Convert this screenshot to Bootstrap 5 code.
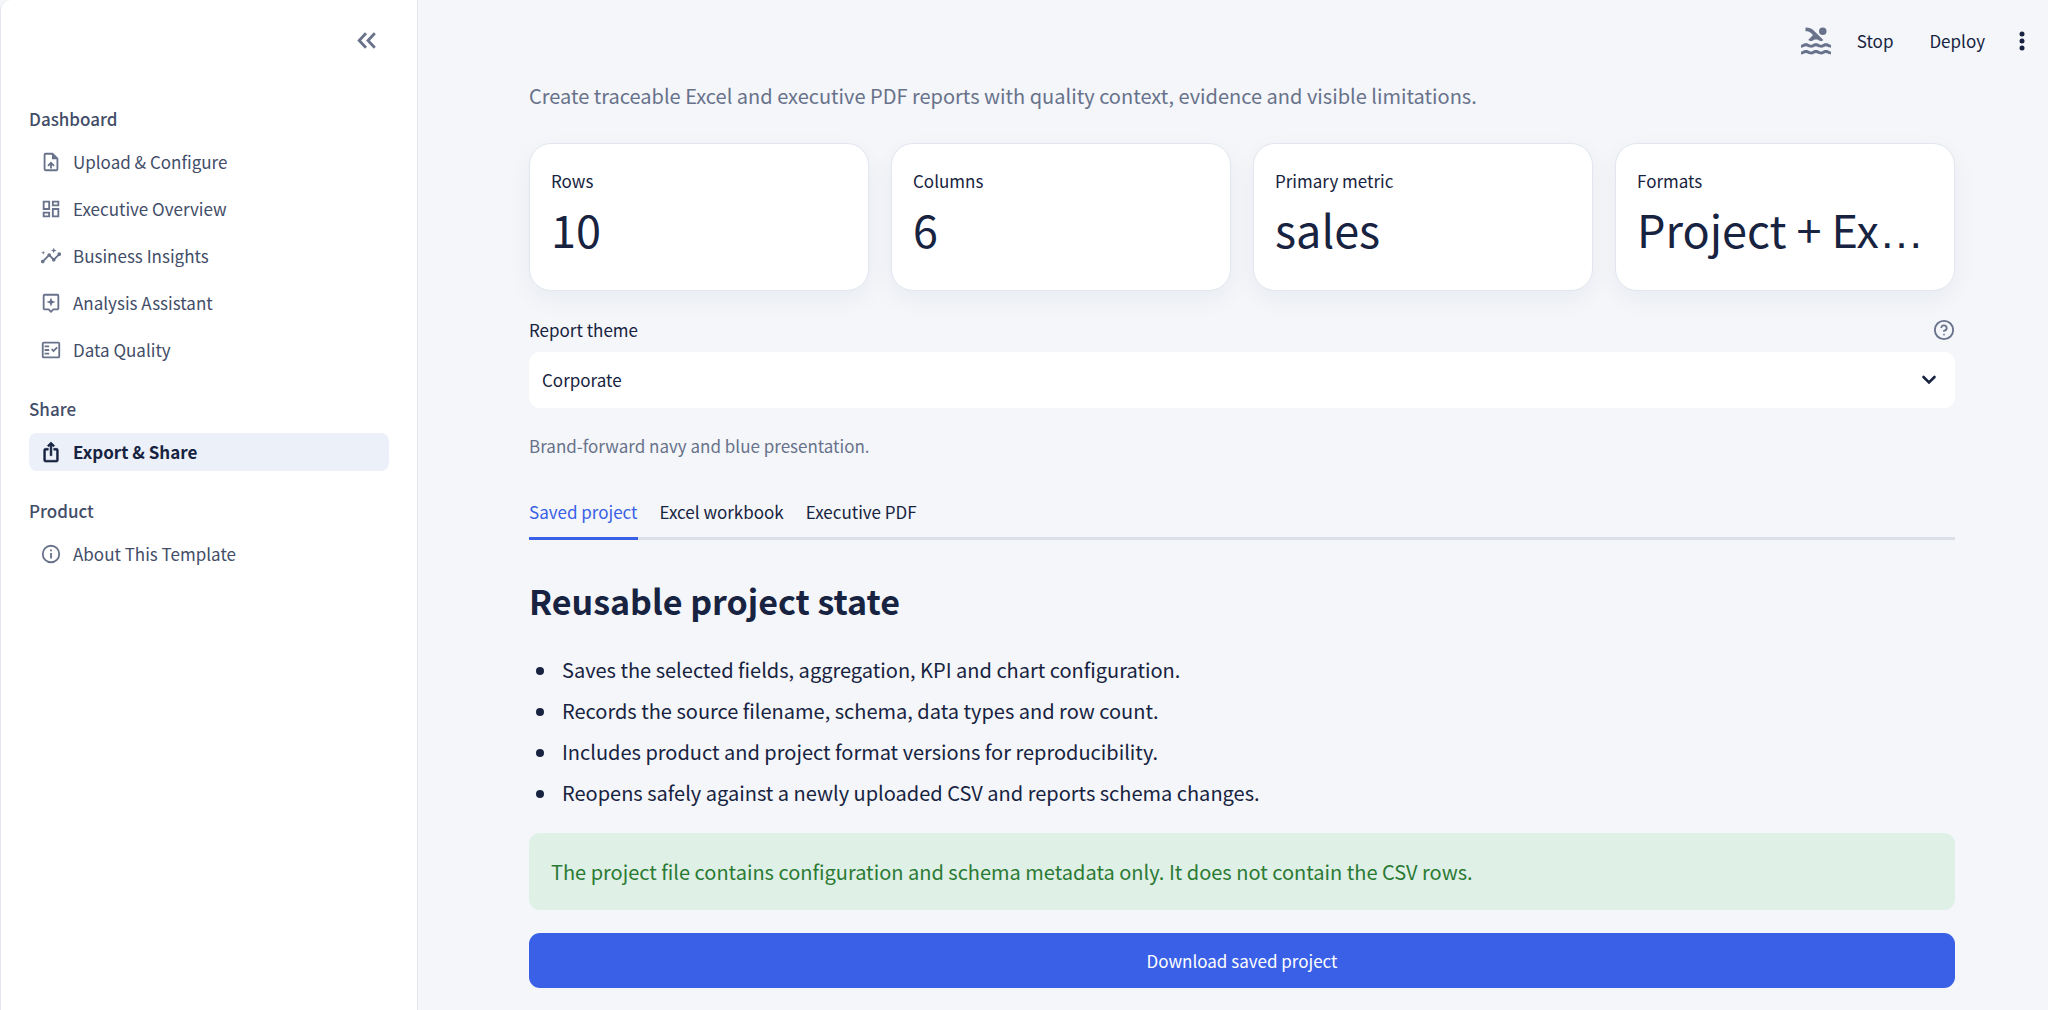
<!DOCTYPE html>
<html lang="en">
<head>
<meta charset="utf-8">
<meta name="viewport" content="width=device-width, initial-scale=1">
<title>Export &amp; Share</title>
<link href="https://cdn.jsdelivr.net/npm/bootstrap@5.3.0/dist/css/bootstrap.min.css" rel="stylesheet">
<style>
  :root { --ink: #172340; --soft: #424d68; --muted: #68728a; --brand: #3960e6; --page: #f4f6fa; }
  body { font-family: "Noto Sans CJK SC", "Open Sans", sans-serif; font-size: 20px; line-height: 32px; color: var(--ink); background: var(--page); }
  svg { display: block; flex: none; fill: currentColor; }
  .line-icon { fill: none; stroke: currentColor; }
  .text-small { font-size: 17px; line-height: 24px; }
  .side { width: 418px; background: #fff; border: 1px solid #e3e6ec; border-width: 0 1px; border-top-left-radius: 10px; padding: 0 28px; }
  .side-top { height: 81px; padding-right: 13px; margin-bottom: 24px; }
  .side-top .btn, .muted-icon { color: var(--muted); }
  .side-head { font-size: 17px; line-height: 28px; font-weight: 500; color: var(--soft); margin: 0 0 10px; }
  .side-group { margin-bottom: 26px; }
  .side-group .nav { gap: 9px; }
  .side-group .nav-link { height: 38px; padding: 0 11px; gap: 11px; border-radius: 8px; color: var(--soft); }
  .side-group .nav-link svg { color: var(--muted); }
  .side-group .nav-link.active, .side-group .nav-link.active svg { color: var(--ink); font-weight: 600; }
  .side-group .nav-link.active { background: #ecf0f9; }
  .bar-top { height: 81px; padding-right: 18px; gap: 29px; }
  .bar-top .btn { color: var(--ink); }
  .bar-actions { gap: 36px; }
  .bar-status { gap: 23px; }
  .page-body { padding: 0 93px 22px 111px; }
  .intro { color: var(--muted); line-height: 30px; margin-bottom: 32px; }
  .metrics { --bs-gutter-x: 22px; margin-bottom: 27px; }
  .metrics .card { border: 1px solid #e1e6ef; border-radius: 22px; padding: 25px 21px; box-shadow: 0 8px 24px rgba(23, 35, 64, .05); color: var(--ink); }
  .figure-value { font-size: 45px; line-height: 72px; }
  .figure-value .dots { font-family: "Liberation Sans", sans-serif; line-height: 1; }
  .label-row { margin-bottom: 10px; }
  .theme-select { height: 56px; border: 0; border-radius: 11px; padding: 0 48px 0 13px; color: var(--ink); font-size: 17px; background-image: none; appearance: none; }
  .select-arrow { position: absolute; right: 18px; top: 20px; pointer-events: none; }
  .caption-text { color: var(--muted); margin: 26px 0 34px; }
  .tab-row { gap: 22px; border-bottom: 3px solid #dcdfe7; }
  .tab-row .nav-link { border: 0; border-bottom: 3px solid transparent; border-radius: 0; padding: 8px 0 13px; margin-bottom: -3px; color: var(--ink); background: none; }
  .tab-row .nav-link.active { color: var(--brand); border-bottom-color: var(--brand); background: none; }
  .section-title { font-size: 34px; line-height: 48px; font-weight: 600; margin: 37px 0 24px; }
  .facts { padding-left: 29px; margin-bottom: 20px; }
  .facts li { line-height: 41px; padding-left: 4px; }
  .note { background: #dff0e7; color: #2b7a33; border: 0; border-radius: 11px; padding: 22px; line-height: 33px; margin-bottom: 23px; }
  .btn-save { height: 55px; border: 0; border-radius: 11px; background: var(--brand); color: #fff; }
</style>
</head>
<body>
<div class="d-flex min-vh-100">
  <aside class="side flex-shrink-0">
    <div class="side-top d-flex align-items-center justify-content-end">
      <button class="btn p-0 border-0" type="button" aria-label="Collapse sidebar">
        <svg class="line-icon" width="19" height="17" viewBox="0 0 19 17" stroke-width="2.8"><path d="M9 1.200 2.200 8.500 9 15.800M17.800 1.200 11 8.500 17.800 15.800"/></svg>
      </button>
    </div>
    <nav>
      <section class="side-group">
        <h2 class="side-head">Dashboard</h2>
        <div class="nav flex-column">
          <a class="nav-link d-flex align-items-center text-small" href="#"><svg width="22" height="22" viewBox="0 0 24 24"><path d="M14 2H6a2 2 0 0 0-2 2v16a2 2 0 0 0 2 2h12a2 2 0 0 0 2-2V8zM18 20H6V4h7v5h5zM8 15.500l1.400 1.400 1.600-1.600V19h2v-3.700l1.600 1.600L16 15.500l-4-4z"/></svg>Upload &amp; Configure</a>
          <a class="nav-link d-flex align-items-center text-small" href="#"><svg width="22" height="22" viewBox="0 0 24 24"><path d="M19 5v2h-4V5zM9 5v6H5V5zm10 8v6h-4v-6zM9 17v2H5v-2zM21 3h-8v6h8zM11 3H3v10h8zm10 8h-8v10h8zm-10 4H3v6h8z"/></svg>Executive Overview</a>
          <a class="nav-link d-flex align-items-center text-small" href="#"><svg width="22" height="22" viewBox="0 0 24 24"><path d="M21 8c-1.450 0-2.260 1.440-1.930 2.510l-3.550 3.560c-.3-.09-.74-.09-1.040 0l-2.550-2.550C12.270 10.450 11.460 9 10 9c-1.450 0-2.270 1.440-1.930 2.520l-4.560 4.550C2.440 15.740 1 16.550 1 18c0 1.100.9 2 2 2 1.450 0 2.260-1.440 1.930-2.510l4.550-4.560c.3.090.74.090 1.040 0l2.550 2.550C12.730 16.550 13.540 18 15 18c1.450 0 2.270-1.440 1.930-2.520l3.560-3.550C21.560 12.260 23 11.450 23 10c0-1.100-.9-2-2-2zM15 9l.94-2.070L18 6l-2.060-.93L15 3l-.92 2.070L12 6l2.080.93zM3.500 11 4 9l2-.5L4 8l-.5-2L3 8l-2 .5L3 9z"/></svg>Business Insights</a>
          <a class="nav-link d-flex align-items-center text-small" href="#"><svg width="22" height="22" viewBox="0 0 24 24"><path d="M19 2H5a2 2 0 0 0-2 2v14a2 2 0 0 0 2 2h4l3 3 3-3h4a2 2 0 0 0 2-2V4a2 2 0 0 0-2-2zm0 16h-4.830L12 20.170 9.830 18H5V4h14zM12 16l1.360-3.640L17 11l-3.640-1.360L12 6l-1.360 3.640L7 11l3.640 1.360z"/></svg>Analysis Assistant</a>
          <a class="nav-link d-flex align-items-center text-small" href="#"><svg width="22" height="22" viewBox="0 0 24 24"><path d="M20 3H4a2 2 0 0 0-2 2v14a2 2 0 0 0 2 2h16a2 2 0 0 0 2-2V5a2 2 0 0 0-2-2zm0 16H4V5h16zM5 7h5v2H5zm0 4h5v2H5zm0 4h5v2H5zM19.400 9.900 18 8.500l-3.200 3.200-1.400-1.400-1.400 1.400 2.800 2.800z"/></svg>Data Quality</a>
        </div>
      </section>
      <section class="side-group">
        <h2 class="side-head">Share</h2>
        <div class="nav flex-column">
          <a class="nav-link active d-flex align-items-center text-small" href="#" aria-current="page"><svg width="22" height="22" viewBox="0 0 24 24"><path d="M16 5l-1.420 1.420-1.590-1.590V16h-1.980V4.830L9.420 6.420 8 5l4-4zM20 10v11a2 2 0 0 1-2 2H6a2 2 0 0 1-2-2V10a2 2 0 0 1 2-2h3v2H6v11h12V10h-3V8h3a2 2 0 0 1 2 2z" stroke="currentColor" stroke-width=".6"/></svg>Export &amp; Share</a>
        </div>
      </section>
      <section class="side-group">
        <h2 class="side-head">Product</h2>
        <div class="nav flex-column">
          <a class="nav-link d-flex align-items-center text-small" href="#"><svg width="22" height="22" viewBox="0 0 24 24"><path d="M11 7h2v2h-2zm0 4h2v6h-2zM12 2a10 10 0 1 0 0 20 10 10 0 0 0 0-20zm0 18a8 8 0 1 1 0-16 8 8 0 0 1 0 16z"/></svg>About This Template</a>
        </div>
      </section>
    </nav>
  </aside>

  <div class="flex-grow-1 overflow-hidden">
    <header class="bar-top d-flex align-items-center justify-content-end">
      <div class="bar-actions d-flex align-items-center">
        <div class="bar-status d-flex align-items-center">
          <svg class="muted-icon" width="36" height="36" viewBox="0 0 24 24"><path d="M10 8l-3.250 3.250c.31.120.56.270.77.390.37.230.59.360 1.150.36s.78-.13 1.150-.36c.46-.27 1.080-.64 2.190-.64s1.730.37 2.180.64c.37.220.6.360 1.150.36.550 0 .78-.13 1.150-.36.120-.07.260-.15.410-.23L10.480 5C8.930 3.450 7.500 2.990 5 3v2.500c1.820-.01 2.890.39 4 1.500zM22 16.500h-.02c-1.110 0-1.730-.37-2.180-.64-.37-.22-.6-.36-1.150-.36-.56 0-.78.13-1.150.36-.46.270-1.080.64-2.190.64s-1.730-.37-2.180-.64c-.37-.23-.59-.36-1.150-.36s-.78.130-1.150.36c-.46.270-1.080.64-2.190.64s-1.730-.37-2.180-.64c-.37-.23-.59-.36-1.150-.36s-.78.130-1.150.36c-.45.260-1.060.62-2.160.64v-2c.56-.010.78-.13 1.150-.36.450-.27 1.070-.64 2.180-.64s1.730.37 2.180.64c.37.230.59.360 1.150.36s.78-.13 1.150-.36c.46-.27 1.080-.64 2.190-.64s1.730.37 2.180.64c.37.230.59.360 1.150.36s.78-.13 1.150-.36c.45-.27 1.070-.64 2.180-.64s1.730.37 2.180.64c.37.230.59.360 1.150.36zM22 21h-.02c-1.110 0-1.730-.37-2.180-.64-.37-.22-.6-.36-1.150-.36-.56 0-.78.13-1.150.36-.46.270-1.080.64-2.190.64s-1.730-.37-2.180-.64c-.37-.23-.59-.36-1.150-.36s-.78.130-1.150.36c-.46.270-1.080.64-2.190.64s-1.730-.37-2.180-.64c-.37-.23-.59-.36-1.150-.36s-.78.130-1.150.36c-.45.260-1.060.62-2.160.64v-2c.56-.010.78-.13 1.150-.36.450-.27 1.070-.64 2.180-.64s1.730.37 2.180.64c.37.230.59.360 1.150.36s.78-.13 1.150-.36c.46-.27 1.080-.64 2.190-.64s1.730.37 2.180.64c.37.230.59.360 1.150.36s.78-.13 1.150-.36c.45-.27 1.070-.64 2.180-.64s1.730.37 2.180.64c.37.230.59.360 1.150.36z"/><circle cx="16.500" cy="5.500" r="2.500"/></svg>
          <button class="btn p-0 border-0 text-small" type="button">Stop</button>
        </div>
        <button class="btn p-0 border-0 text-small" type="button">Deploy</button>
      </div>
      <button class="btn p-0 border-0" type="button" aria-label="More options"><svg width="16" height="20" viewBox="0 0 16 20"><circle cx="8" cy="3" r="2.500"/><circle cx="8" cy="10" r="2.500"/><circle cx="8" cy="17" r="2.500"/></svg></button>
    </header>

    <main class="page-body">
      <p class="intro">Create traceable Excel and executive PDF reports with quality context, evidence and visible limitations.</p>

      <div class="row metrics">
        <div class="col-3"><div class="card"><div class="text-small">Rows</div><div class="figure-value text-nowrap">10</div></div></div>
        <div class="col-3"><div class="card"><div class="text-small">Columns</div><div class="figure-value text-nowrap">6</div></div></div>
        <div class="col-3"><div class="card"><div class="text-small">Primary metric</div><div class="figure-value text-nowrap">sales</div></div></div>
        <div class="col-3"><div class="card"><div class="text-small">Formats</div><div class="figure-value text-nowrap">Project + Ex<span class="dots">…</span></div></div></div>
      </div>

      <div class="label-row d-flex justify-content-between align-items-center">
        <label class="text-small" for="theme">Report theme</label>
        <svg class="line-icon muted-icon" width="22" height="22" viewBox="0 0 24 24" stroke-width="2" stroke-linecap="round" stroke-linejoin="round"><circle cx="12" cy="12" r="10"/><path d="M9.090 9a3 3 0 0 1 5.830 1c0 2-3 3-3 3M12 17h.01"/></svg>
      </div>
      <div class="position-relative">
        <select class="form-select theme-select" id="theme"><option>Corporate</option></select>
        <svg class="select-arrow line-icon" width="16" height="16" viewBox="0 0 16 16" stroke-width="2.600" stroke-linecap="round"><path d="M2.500 5 8 10.500 13.500 5"/></svg>
      </div>
      <p class="caption-text text-small">Brand-forward navy and blue presentation.</p>

      <div class="nav nav-tabs tab-row" role="tablist">
        <button class="nav-link active text-small" type="button" role="tab" aria-selected="true">Saved project</button>
        <button class="nav-link text-small" type="button" role="tab" aria-selected="false">Excel workbook</button>
        <button class="nav-link text-small" type="button" role="tab" aria-selected="false">Executive PDF</button>
      </div>

      <h1 class="section-title">Reusable project state</h1>
      <ul class="facts">
        <li>Saves the selected fields, aggregation, KPI and chart configuration.</li>
        <li>Records the source filename, schema, data types and row count.</li>
        <li>Includes product and project format versions for reproducibility.</li>
        <li>Reopens safely against a newly uploaded CSV and reports schema changes.</li>
      </ul>
      <div class="alert note" role="alert">The project file contains configuration and schema metadata only. It does not contain the CSV rows.</div>
      <button class="btn btn-save w-100 text-small" type="button">Download saved project</button>
    </main>
  </div>
</div>
<script src="https://cdn.jsdelivr.net/npm/bootstrap@5.3.0/dist/js/bootstrap.bundle.min.js"></script>
</body>
</html>
